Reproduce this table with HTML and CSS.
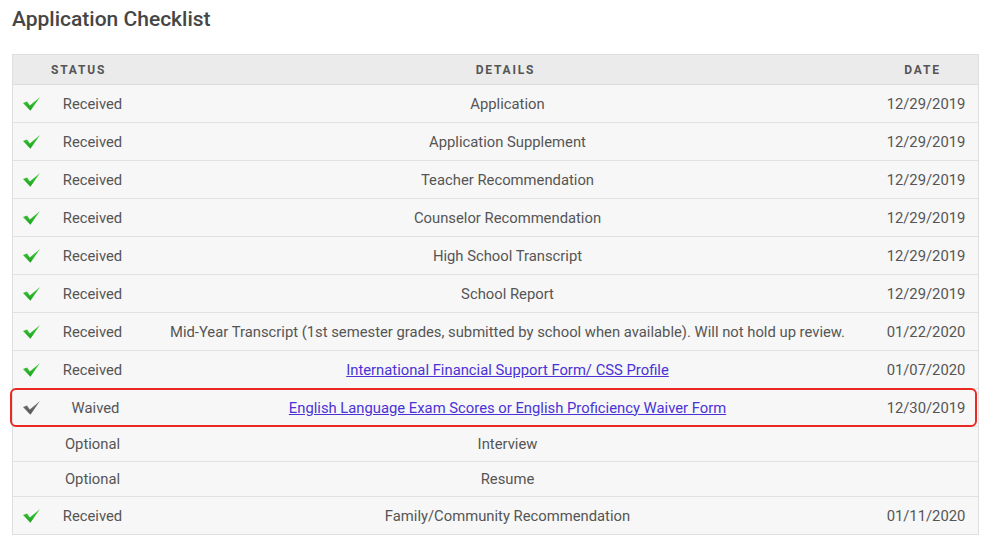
FILE: index.html
```html
<!DOCTYPE html>
<html>
<head>
<meta charset="utf-8">
<link rel="stylesheet" href="styles.css">
</head>
<body>
<svg width="0" height="0" class="defs">
  <defs>
    <linearGradient id="g" x1="0" y1="0" x2="0" y2="1">
      <stop offset="0" stop-color="#3fd13a"/>
      <stop offset="1" stop-color="#1f9f1f"/>
    </linearGradient>
    <linearGradient id="gr" x1="0" y1="0" x2="0" y2="1">
      <stop offset="0" stop-color="#7a7a7a"/>
      <stop offset="1" stop-color="#555"/>
    </linearGradient>
    <symbol id="tick" viewBox="0 0 17 14">
      <path d="M0 6 L4 4.6 L6.8 8.4 L17 0 L7.4 13.8 Z"/>
    </symbol>
  </defs>
</svg>
<h2 class="title">Application Checklist</h2>
<div class="table">
  <div class="row head">
    <div class="c-status-head">STATUS</div>
    <div class="c-details">DETAILS</div>
    <div class="c-date">DATE</div>
  </div>
  <div class="row tall">
    <div class="c-icon"><svg class="tick ok"><use href="#tick"/></svg></div>
    <div class="c-status">Received</div>
    <div class="c-details">Application</div>
    <div class="c-date">12/29/2019</div>
  </div>
  <div class="row tall">
    <div class="c-icon"><svg class="tick ok"><use href="#tick"/></svg></div>
    <div class="c-status">Received</div>
    <div class="c-details">Application Supplement</div>
    <div class="c-date">12/29/2019</div>
  </div>
  <div class="row tall">
    <div class="c-icon"><svg class="tick ok"><use href="#tick"/></svg></div>
    <div class="c-status">Received</div>
    <div class="c-details">Teacher Recommendation</div>
    <div class="c-date">12/29/2019</div>
  </div>
  <div class="row tall">
    <div class="c-icon"><svg class="tick ok"><use href="#tick"/></svg></div>
    <div class="c-status">Received</div>
    <div class="c-details">Counselor Recommendation</div>
    <div class="c-date">12/29/2019</div>
  </div>
  <div class="row tall">
    <div class="c-icon"><svg class="tick ok"><use href="#tick"/></svg></div>
    <div class="c-status">Received</div>
    <div class="c-details">High School Transcript</div>
    <div class="c-date">12/29/2019</div>
  </div>
  <div class="row tall">
    <div class="c-icon"><svg class="tick ok"><use href="#tick"/></svg></div>
    <div class="c-status">Received</div>
    <div class="c-details">School Report</div>
    <div class="c-date">12/29/2019</div>
  </div>
  <div class="row tall">
    <div class="c-icon"><svg class="tick ok"><use href="#tick"/></svg></div>
    <div class="c-status">Received</div>
    <div class="c-details">Mid-Year Transcript (1st semester grades, submitted by school when available). Will not hold up review.</div>
    <div class="c-date">01/22/2020</div>
  </div>
  <div class="row tall">
    <div class="c-icon"><svg class="tick ok"><use href="#tick"/></svg></div>
    <div class="c-status">Received</div>
    <div class="c-details"><a href="#">International Financial Support Form/ CSS Profile</a></div>
    <div class="c-date">01/07/2020</div>
  </div>
  <div class="row tall highlight">
    <div class="c-icon"><svg class="tick waived"><use href="#tick"/></svg></div>
    <div class="c-status waived-text">Waived</div>
    <div class="c-details"><a href="#">English Language Exam Scores or English Proficiency Waiver Form</a></div>
    <div class="c-date">12/30/2019</div>
  </div>
  <div class="row">
    <div class="c-icon"></div>
    <div class="c-status">Optional</div>
    <div class="c-details">Interview</div>
    <div class="c-date"></div>
  </div>
  <div class="row">
    <div class="c-icon"></div>
    <div class="c-status">Optional</div>
    <div class="c-details">Resume</div>
    <div class="c-date"></div>
  </div>
  <div class="row tall">
    <div class="c-icon"><svg class="tick ok"><use href="#tick"/></svg></div>
    <div class="c-status">Received</div>
    <div class="c-details">Family/Community Recommendation</div>
    <div class="c-date">01/11/2020</div>
  </div>
</div>
</body>
</html>
```

FILE: styles.css
```css
html, body {
  margin: 0;
  background: #fff;
}
body {
  padding: 0 11px 0 12px;
  font-family: Roboto, "Liberation Sans", sans-serif;
  color: #555;
  font-size: 14.8px;
}
.defs {
  position: absolute;
  width: 0;
  height: 0;
}
.title {
  margin: 0;
  padding: 7px 0 0 0;
  height: 54px;
  box-sizing: border-box;
  font-size: 21px;
  font-weight: 500;
  color: #454545;
  line-height: 24px;
}
.table {
  border: 1px solid #dedede;
  border-bottom: none;
  background: #f7f7f7;
}
.row {
  display: grid;
  grid-template-columns: 36px 87px 1fr 109px;
  align-items: center;
  min-height: 34px;
  border-bottom: 1px solid #e1e1e1;
  position: relative;
}
.row.tall {
  min-height: 37px;
}
.row.head {
  min-height: 29px;
  background: #ebebeb;
  border-bottom: 1px solid #dcdcdc;
  font-size: 12px;
  font-weight: 700;
  letter-spacing: 1.8px;
  color: #555;
}
.c-status-head {
  grid-column: 1 / span 2;
  padding-left: 38px;
}
.c-icon {
  display: flex;
  justify-content: center;
  align-items: center;
}
.tick {
  width: 17px;
  height: 14px;
  margin-top: 1px;
}
.tick.ok {
  fill: url(#g);
}
.tick.waived {
  fill: url(#gr);
}
.c-status {
  text-align: center;
  line-height: 20px;
}
.c-status.waived-text {
  padding-left: 6px;
}
.c-details {
  text-align: center;
  padding-left: 10px;
  line-height: 20px;
}
.row.head .c-details {
  padding-left: 6px;
}
.c-date {
  text-align: center;
  padding-left: 5px;
  line-height: 20px;
}
.row.head .c-date {
  padding-left: 0;
  padding-right: 2px;
}
a {
  color: #4a33d6;
  text-decoration: underline;
}
.highlight::after {
  content: "";
  position: absolute;
  top: -1px;
  bottom: -1px;
  left: -3px;
  right: 1px;
  border: 2px solid #ea2a22;
  border-radius: 6px;
  pointer-events: none;
}
```
